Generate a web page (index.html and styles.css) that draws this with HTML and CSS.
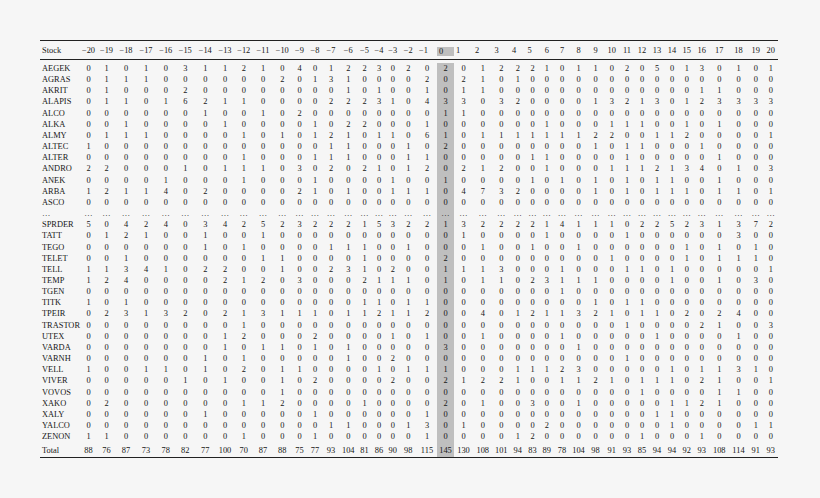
FILE: index.html
```html
<!DOCTYPE html>
<html lang="en">
<head>
<meta charset="utf-8">
<title>Event window counts</title>
<link rel="stylesheet" href="styles.css">
</head>
<body>
<div class="page">
<table class="counts">
<colgroup><col><col><col><col><col><col><col><col><col><col><col><col><col><col><col><col><col><col><col><col><col><col><col><col><col><col><col><col><col><col><col><col><col><col><col><col><col><col><col><col><col><col></colgroup>
<thead>
<tr><th class="lab">Stock</th><th>−20</th><th>−19</th><th>−18</th><th>−17</th><th>−16</th><th>−15</th><th>−14</th><th>−13</th><th>−12</th><th>−11</th><th>−10</th><th>−9</th><th>−8</th><th>−7</th><th>−6</th><th>−5</th><th>−4</th><th>−3</th><th>−2</th><th>−1</th><th><span class="zero">0</span></th><th>1</th><th>2</th><th>3</th><th>4</th><th>5</th><th>6</th><th>7</th><th>8</th><th>9</th><th>10</th><th>11</th><th>12</th><th>13</th><th>14</th><th>15</th><th>16</th><th>17</th><th>18</th><th>19</th><th>20</th></tr>
</thead>
<tbody>
<tr><th class="lab">AEGEK</th><td>0</td><td>1</td><td>0</td><td>1</td><td>0</td><td>3</td><td>1</td><td>1</td><td>2</td><td>1</td><td>0</td><td>4</td><td>0</td><td>1</td><td>2</td><td>2</td><td>3</td><td>0</td><td>2</td><td>0</td><td>2</td><td>0</td><td>1</td><td>2</td><td>2</td><td>2</td><td>1</td><td>0</td><td>1</td><td>1</td><td>0</td><td>2</td><td>0</td><td>5</td><td>0</td><td>1</td><td>3</td><td>0</td><td>1</td><td>0</td><td>1</td></tr>
<tr><th class="lab">AGRAS</th><td>0</td><td>1</td><td>1</td><td>1</td><td>0</td><td>0</td><td>0</td><td>0</td><td>0</td><td>0</td><td>2</td><td>0</td><td>1</td><td>3</td><td>1</td><td>0</td><td>0</td><td>0</td><td>0</td><td>2</td><td>0</td><td>2</td><td>1</td><td>0</td><td>1</td><td>0</td><td>0</td><td>0</td><td>0</td><td>0</td><td>0</td><td>0</td><td>0</td><td>0</td><td>0</td><td>0</td><td>0</td><td>0</td><td>0</td><td>0</td><td>0</td></tr>
<tr><th class="lab">AKRIT</th><td>0</td><td>1</td><td>0</td><td>0</td><td>0</td><td>2</td><td>0</td><td>0</td><td>0</td><td>0</td><td>0</td><td>0</td><td>0</td><td>0</td><td>1</td><td>0</td><td>1</td><td>0</td><td>0</td><td>1</td><td>0</td><td>1</td><td>1</td><td>0</td><td>0</td><td>0</td><td>0</td><td>0</td><td>0</td><td>0</td><td>0</td><td>0</td><td>0</td><td>0</td><td>0</td><td>0</td><td>1</td><td>1</td><td>0</td><td>0</td><td>0</td></tr>
<tr><th class="lab">ALAPIS</th><td>0</td><td>1</td><td>1</td><td>0</td><td>1</td><td>6</td><td>2</td><td>1</td><td>1</td><td>0</td><td>0</td><td>0</td><td>0</td><td>2</td><td>2</td><td>2</td><td>3</td><td>1</td><td>0</td><td>4</td><td>3</td><td>3</td><td>0</td><td>3</td><td>2</td><td>0</td><td>0</td><td>0</td><td>0</td><td>1</td><td>3</td><td>2</td><td>1</td><td>3</td><td>0</td><td>1</td><td>2</td><td>3</td><td>3</td><td>3</td><td>3</td></tr>
<tr><th class="lab">ALCO</th><td>0</td><td>0</td><td>0</td><td>0</td><td>0</td><td>0</td><td>1</td><td>0</td><td>0</td><td>1</td><td>0</td><td>2</td><td>0</td><td>0</td><td>0</td><td>0</td><td>0</td><td>0</td><td>0</td><td>0</td><td>1</td><td>1</td><td>0</td><td>0</td><td>0</td><td>0</td><td>0</td><td>0</td><td>0</td><td>0</td><td>0</td><td>0</td><td>0</td><td>0</td><td>0</td><td>0</td><td>0</td><td>0</td><td>0</td><td>0</td><td>0</td></tr>
<tr><th class="lab">ALKA</th><td>0</td><td>0</td><td>1</td><td>0</td><td>0</td><td>0</td><td>0</td><td>1</td><td>0</td><td>0</td><td>0</td><td>0</td><td>1</td><td>0</td><td>2</td><td>2</td><td>0</td><td>0</td><td>0</td><td>1</td><td>0</td><td>0</td><td>0</td><td>0</td><td>0</td><td>0</td><td>1</td><td>0</td><td>0</td><td>0</td><td>1</td><td>1</td><td>1</td><td>0</td><td>0</td><td>1</td><td>0</td><td>1</td><td>0</td><td>0</td><td>0</td></tr>
<tr><th class="lab">ALMY</th><td>0</td><td>1</td><td>1</td><td>1</td><td>0</td><td>0</td><td>0</td><td>0</td><td>1</td><td>0</td><td>1</td><td>0</td><td>1</td><td>2</td><td>1</td><td>0</td><td>1</td><td>1</td><td>0</td><td>6</td><td>1</td><td>0</td><td>1</td><td>1</td><td>1</td><td>1</td><td>1</td><td>1</td><td>1</td><td>2</td><td>2</td><td>0</td><td>0</td><td>1</td><td>1</td><td>2</td><td>0</td><td>0</td><td>0</td><td>0</td><td>1</td></tr>
<tr><th class="lab">ALTEC</th><td>1</td><td>0</td><td>0</td><td>0</td><td>0</td><td>0</td><td>0</td><td>0</td><td>0</td><td>0</td><td>0</td><td>0</td><td>0</td><td>1</td><td>1</td><td>0</td><td>0</td><td>0</td><td>1</td><td>0</td><td>2</td><td>0</td><td>0</td><td>0</td><td>0</td><td>0</td><td>0</td><td>0</td><td>0</td><td>1</td><td>0</td><td>1</td><td>1</td><td>0</td><td>0</td><td>0</td><td>1</td><td>0</td><td>0</td><td>0</td><td>0</td></tr>
<tr><th class="lab">ALTER</th><td>0</td><td>0</td><td>0</td><td>0</td><td>0</td><td>0</td><td>0</td><td>0</td><td>1</td><td>0</td><td>0</td><td>0</td><td>1</td><td>1</td><td>1</td><td>0</td><td>0</td><td>0</td><td>1</td><td>1</td><td>0</td><td>0</td><td>0</td><td>0</td><td>0</td><td>1</td><td>1</td><td>0</td><td>0</td><td>0</td><td>0</td><td>1</td><td>0</td><td>0</td><td>0</td><td>0</td><td>0</td><td>1</td><td>0</td><td>0</td><td>0</td></tr>
<tr><th class="lab">ANDRO</th><td>2</td><td>2</td><td>0</td><td>0</td><td>0</td><td>1</td><td>0</td><td>1</td><td>1</td><td>1</td><td>0</td><td>3</td><td>0</td><td>2</td><td>0</td><td>2</td><td>1</td><td>0</td><td>1</td><td>2</td><td>0</td><td>2</td><td>1</td><td>2</td><td>0</td><td>0</td><td>1</td><td>0</td><td>0</td><td>0</td><td>1</td><td>1</td><td>1</td><td>2</td><td>1</td><td>3</td><td>4</td><td>0</td><td>1</td><td>0</td><td>3</td></tr>
<tr><th class="lab">ANEK</th><td>0</td><td>0</td><td>0</td><td>0</td><td>1</td><td>0</td><td>0</td><td>0</td><td>1</td><td>0</td><td>0</td><td>0</td><td>1</td><td>0</td><td>0</td><td>0</td><td>0</td><td>1</td><td>0</td><td>0</td><td>1</td><td>0</td><td>0</td><td>0</td><td>0</td><td>1</td><td>0</td><td>1</td><td>0</td><td>1</td><td>0</td><td>1</td><td>0</td><td>1</td><td>1</td><td>0</td><td>0</td><td>1</td><td>0</td><td>0</td><td>0</td></tr>
<tr><th class="lab">ARBA</th><td>1</td><td>2</td><td>1</td><td>1</td><td>4</td><td>0</td><td>2</td><td>0</td><td>0</td><td>0</td><td>0</td><td>2</td><td>1</td><td>0</td><td>1</td><td>0</td><td>0</td><td>1</td><td>1</td><td>1</td><td>0</td><td>4</td><td>7</td><td>3</td><td>2</td><td>0</td><td>0</td><td>0</td><td>0</td><td>1</td><td>0</td><td>1</td><td>0</td><td>1</td><td>1</td><td>1</td><td>0</td><td>1</td><td>1</td><td>0</td><td>1</td></tr>
<tr><th class="lab">ASCO</th><td>0</td><td>0</td><td>0</td><td>0</td><td>0</td><td>0</td><td>0</td><td>0</td><td>0</td><td>0</td><td>0</td><td>0</td><td>0</td><td>0</td><td>0</td><td>0</td><td>0</td><td>0</td><td>0</td><td>0</td><td>0</td><td>0</td><td>0</td><td>0</td><td>0</td><td>0</td><td>0</td><td>0</td><td>0</td><td>0</td><td>0</td><td>0</td><td>0</td><td>0</td><td>0</td><td>0</td><td>0</td><td>0</td><td>0</td><td>0</td><td>0</td></tr>
<tr class="dots"><th class="lab">…</th><td>…</td><td>…</td><td>…</td><td>…</td><td>…</td><td>…</td><td>…</td><td>…</td><td>…</td><td>…</td><td>…</td><td>…</td><td>…</td><td>…</td><td>…</td><td>…</td><td>…</td><td>…</td><td>…</td><td>…</td><td>…</td><td>…</td><td>…</td><td>…</td><td>…</td><td>…</td><td>…</td><td>…</td><td>…</td><td>…</td><td>…</td><td>…</td><td>…</td><td>…</td><td>…</td><td>…</td><td>…</td><td>…</td><td>…</td><td>…</td><td>…</td></tr>
<tr><th class="lab">SPRDER</th><td>5</td><td>0</td><td>4</td><td>2</td><td>4</td><td>0</td><td>3</td><td>4</td><td>2</td><td>5</td><td>2</td><td>3</td><td>2</td><td>2</td><td>2</td><td>1</td><td>5</td><td>3</td><td>2</td><td>2</td><td>1</td><td>3</td><td>2</td><td>2</td><td>2</td><td>2</td><td>1</td><td>4</td><td>1</td><td>1</td><td>1</td><td>0</td><td>2</td><td>2</td><td>5</td><td>2</td><td>3</td><td>1</td><td>3</td><td>7</td><td>2</td></tr>
<tr><th class="lab">TATT</th><td>0</td><td>1</td><td>2</td><td>1</td><td>0</td><td>0</td><td>1</td><td>0</td><td>0</td><td>1</td><td>0</td><td>0</td><td>0</td><td>0</td><td>0</td><td>0</td><td>0</td><td>0</td><td>0</td><td>0</td><td>0</td><td>1</td><td>0</td><td>0</td><td>0</td><td>0</td><td>1</td><td>0</td><td>0</td><td>0</td><td>0</td><td>1</td><td>0</td><td>0</td><td>0</td><td>0</td><td>0</td><td>0</td><td>3</td><td>0</td><td>0</td></tr>
<tr><th class="lab">TEGO</th><td>0</td><td>0</td><td>0</td><td>0</td><td>0</td><td>0</td><td>1</td><td>0</td><td>1</td><td>0</td><td>0</td><td>0</td><td>0</td><td>1</td><td>1</td><td>1</td><td>0</td><td>0</td><td>1</td><td>0</td><td>0</td><td>0</td><td>1</td><td>0</td><td>0</td><td>1</td><td>0</td><td>0</td><td>1</td><td>0</td><td>0</td><td>0</td><td>0</td><td>0</td><td>0</td><td>1</td><td>0</td><td>1</td><td>0</td><td>1</td><td>0</td></tr>
<tr><th class="lab">TELET</th><td>0</td><td>0</td><td>1</td><td>0</td><td>0</td><td>0</td><td>0</td><td>0</td><td>0</td><td>1</td><td>1</td><td>0</td><td>0</td><td>0</td><td>0</td><td>1</td><td>0</td><td>0</td><td>0</td><td>0</td><td>2</td><td>0</td><td>0</td><td>0</td><td>0</td><td>0</td><td>0</td><td>0</td><td>0</td><td>0</td><td>1</td><td>0</td><td>0</td><td>0</td><td>0</td><td>1</td><td>0</td><td>1</td><td>1</td><td>1</td><td>0</td></tr>
<tr><th class="lab">TELL</th><td>1</td><td>1</td><td>3</td><td>4</td><td>1</td><td>0</td><td>2</td><td>2</td><td>0</td><td>0</td><td>1</td><td>0</td><td>0</td><td>2</td><td>3</td><td>1</td><td>0</td><td>2</td><td>0</td><td>0</td><td>1</td><td>1</td><td>1</td><td>3</td><td>0</td><td>0</td><td>0</td><td>1</td><td>0</td><td>0</td><td>0</td><td>1</td><td>1</td><td>0</td><td>1</td><td>0</td><td>0</td><td>0</td><td>0</td><td>0</td><td>1</td></tr>
<tr><th class="lab">TEMP</th><td>1</td><td>2</td><td>4</td><td>0</td><td>0</td><td>0</td><td>0</td><td>2</td><td>1</td><td>2</td><td>0</td><td>3</td><td>0</td><td>0</td><td>0</td><td>2</td><td>1</td><td>1</td><td>1</td><td>0</td><td>1</td><td>0</td><td>1</td><td>1</td><td>0</td><td>2</td><td>3</td><td>1</td><td>1</td><td>1</td><td>0</td><td>0</td><td>0</td><td>0</td><td>1</td><td>0</td><td>0</td><td>1</td><td>0</td><td>3</td><td>0</td></tr>
<tr><th class="lab">TGEN</th><td>0</td><td>0</td><td>0</td><td>0</td><td>0</td><td>0</td><td>0</td><td>0</td><td>0</td><td>0</td><td>0</td><td>0</td><td>0</td><td>0</td><td>0</td><td>0</td><td>0</td><td>0</td><td>0</td><td>0</td><td>0</td><td>0</td><td>0</td><td>0</td><td>0</td><td>0</td><td>0</td><td>1</td><td>0</td><td>0</td><td>0</td><td>0</td><td>0</td><td>0</td><td>0</td><td>0</td><td>0</td><td>0</td><td>0</td><td>0</td><td>0</td></tr>
<tr><th class="lab">TITK</th><td>1</td><td>0</td><td>1</td><td>0</td><td>0</td><td>0</td><td>0</td><td>0</td><td>0</td><td>0</td><td>0</td><td>0</td><td>0</td><td>0</td><td>0</td><td>1</td><td>1</td><td>0</td><td>1</td><td>1</td><td>0</td><td>0</td><td>0</td><td>0</td><td>0</td><td>0</td><td>0</td><td>0</td><td>0</td><td>1</td><td>0</td><td>1</td><td>1</td><td>0</td><td>0</td><td>0</td><td>0</td><td>0</td><td>0</td><td>0</td><td>0</td></tr>
<tr><th class="lab">TPEIR</th><td>0</td><td>2</td><td>3</td><td>1</td><td>3</td><td>2</td><td>0</td><td>2</td><td>1</td><td>3</td><td>1</td><td>1</td><td>1</td><td>0</td><td>1</td><td>1</td><td>2</td><td>1</td><td>1</td><td>2</td><td>0</td><td>0</td><td>4</td><td>0</td><td>1</td><td>2</td><td>1</td><td>1</td><td>3</td><td>2</td><td>1</td><td>0</td><td>1</td><td>1</td><td>0</td><td>2</td><td>0</td><td>2</td><td>4</td><td>0</td><td>0</td></tr>
<tr><th class="lab">TRASTOR</th><td>0</td><td>0</td><td>0</td><td>0</td><td>0</td><td>0</td><td>0</td><td>0</td><td>1</td><td>0</td><td>0</td><td>0</td><td>0</td><td>0</td><td>0</td><td>0</td><td>0</td><td>0</td><td>0</td><td>0</td><td>0</td><td>0</td><td>0</td><td>0</td><td>0</td><td>0</td><td>0</td><td>0</td><td>0</td><td>0</td><td>0</td><td>1</td><td>0</td><td>0</td><td>0</td><td>0</td><td>2</td><td>1</td><td>0</td><td>0</td><td>3</td></tr>
<tr><th class="lab">UTEX</th><td>0</td><td>0</td><td>0</td><td>0</td><td>0</td><td>0</td><td>0</td><td>1</td><td>2</td><td>0</td><td>0</td><td>0</td><td>2</td><td>0</td><td>0</td><td>0</td><td>0</td><td>1</td><td>0</td><td>1</td><td>0</td><td>0</td><td>1</td><td>0</td><td>0</td><td>0</td><td>0</td><td>1</td><td>0</td><td>0</td><td>0</td><td>0</td><td>0</td><td>1</td><td>0</td><td>0</td><td>0</td><td>0</td><td>1</td><td>0</td><td>0</td></tr>
<tr><th class="lab">VARDA</th><td>0</td><td>0</td><td>0</td><td>0</td><td>0</td><td>0</td><td>0</td><td>1</td><td>0</td><td>1</td><td>1</td><td>0</td><td>1</td><td>0</td><td>1</td><td>0</td><td>0</td><td>0</td><td>0</td><td>0</td><td>3</td><td>0</td><td>0</td><td>0</td><td>0</td><td>0</td><td>0</td><td>0</td><td>1</td><td>0</td><td>0</td><td>0</td><td>0</td><td>0</td><td>0</td><td>0</td><td>0</td><td>0</td><td>0</td><td>0</td><td>0</td></tr>
<tr><th class="lab">VARNH</th><td>0</td><td>0</td><td>0</td><td>0</td><td>0</td><td>0</td><td>1</td><td>0</td><td>1</td><td>0</td><td>0</td><td>0</td><td>0</td><td>0</td><td>1</td><td>0</td><td>0</td><td>2</td><td>0</td><td>0</td><td>0</td><td>0</td><td>0</td><td>0</td><td>0</td><td>0</td><td>0</td><td>0</td><td>0</td><td>0</td><td>0</td><td>1</td><td>0</td><td>0</td><td>0</td><td>0</td><td>0</td><td>0</td><td>0</td><td>0</td><td>0</td></tr>
<tr><th class="lab">VELL</th><td>1</td><td>0</td><td>0</td><td>1</td><td>1</td><td>0</td><td>1</td><td>0</td><td>2</td><td>0</td><td>1</td><td>1</td><td>0</td><td>0</td><td>0</td><td>0</td><td>1</td><td>0</td><td>1</td><td>1</td><td>1</td><td>0</td><td>0</td><td>0</td><td>1</td><td>1</td><td>1</td><td>2</td><td>3</td><td>0</td><td>0</td><td>0</td><td>0</td><td>0</td><td>1</td><td>0</td><td>1</td><td>1</td><td>3</td><td>1</td><td>0</td></tr>
<tr><th class="lab">VIVER</th><td>0</td><td>0</td><td>0</td><td>0</td><td>0</td><td>1</td><td>0</td><td>1</td><td>0</td><td>0</td><td>1</td><td>0</td><td>2</td><td>0</td><td>0</td><td>0</td><td>0</td><td>2</td><td>0</td><td>0</td><td>2</td><td>1</td><td>2</td><td>2</td><td>1</td><td>0</td><td>0</td><td>1</td><td>1</td><td>2</td><td>1</td><td>0</td><td>1</td><td>1</td><td>1</td><td>0</td><td>2</td><td>1</td><td>0</td><td>0</td><td>1</td></tr>
<tr><th class="lab">VOVOS</th><td>0</td><td>0</td><td>0</td><td>0</td><td>0</td><td>0</td><td>0</td><td>0</td><td>0</td><td>0</td><td>1</td><td>0</td><td>0</td><td>0</td><td>0</td><td>0</td><td>0</td><td>0</td><td>0</td><td>0</td><td>0</td><td>0</td><td>0</td><td>0</td><td>0</td><td>0</td><td>0</td><td>0</td><td>0</td><td>0</td><td>0</td><td>0</td><td>1</td><td>0</td><td>0</td><td>0</td><td>0</td><td>1</td><td>1</td><td>0</td><td>0</td></tr>
<tr><th class="lab">XAKO</th><td>0</td><td>2</td><td>0</td><td>0</td><td>0</td><td>0</td><td>0</td><td>0</td><td>1</td><td>1</td><td>2</td><td>0</td><td>0</td><td>0</td><td>0</td><td>1</td><td>0</td><td>0</td><td>0</td><td>0</td><td>2</td><td>0</td><td>1</td><td>0</td><td>0</td><td>3</td><td>0</td><td>0</td><td>1</td><td>0</td><td>0</td><td>0</td><td>0</td><td>0</td><td>1</td><td>1</td><td>2</td><td>1</td><td>0</td><td>0</td><td>0</td></tr>
<tr><th class="lab">XALY</th><td>0</td><td>0</td><td>0</td><td>0</td><td>0</td><td>0</td><td>1</td><td>0</td><td>0</td><td>0</td><td>0</td><td>0</td><td>1</td><td>0</td><td>0</td><td>0</td><td>0</td><td>0</td><td>0</td><td>1</td><td>0</td><td>0</td><td>0</td><td>0</td><td>0</td><td>0</td><td>0</td><td>0</td><td>0</td><td>0</td><td>0</td><td>0</td><td>0</td><td>1</td><td>1</td><td>0</td><td>0</td><td>0</td><td>0</td><td>0</td><td>0</td></tr>
<tr><th class="lab">YALCO</th><td>0</td><td>0</td><td>0</td><td>0</td><td>0</td><td>0</td><td>0</td><td>0</td><td>0</td><td>0</td><td>0</td><td>0</td><td>0</td><td>1</td><td>1</td><td>0</td><td>0</td><td>0</td><td>1</td><td>3</td><td>0</td><td>1</td><td>0</td><td>0</td><td>0</td><td>0</td><td>2</td><td>0</td><td>0</td><td>0</td><td>0</td><td>0</td><td>0</td><td>0</td><td>1</td><td>0</td><td>0</td><td>0</td><td>0</td><td>1</td><td>1</td></tr>
<tr><th class="lab">ZENON</th><td>1</td><td>1</td><td>0</td><td>0</td><td>0</td><td>0</td><td>0</td><td>0</td><td>1</td><td>0</td><td>0</td><td>0</td><td>1</td><td>0</td><td>0</td><td>0</td><td>0</td><td>0</td><td>0</td><td>1</td><td>0</td><td>0</td><td>0</td><td>0</td><td>1</td><td>2</td><td>0</td><td>0</td><td>0</td><td>0</td><td>0</td><td>0</td><td>1</td><td>0</td><td>0</td><td>0</td><td>1</td><td>0</td><td>0</td><td>0</td><td>0</td></tr>
</tbody>
<tfoot>
<tr><th class="lab">Total</th><td>88</td><td>76</td><td>87</td><td>73</td><td>78</td><td>82</td><td>77</td><td>100</td><td>70</td><td>87</td><td>88</td><td>75</td><td>77</td><td>93</td><td>104</td><td>81</td><td>86</td><td>90</td><td>98</td><td>115</td><td>145</td><td>130</td><td>108</td><td>101</td><td>94</td><td>83</td><td>89</td><td>78</td><td>104</td><td>98</td><td>91</td><td>93</td><td>85</td><td>94</td><td>94</td><td>92</td><td>93</td><td>108</td><td>114</td><td>91</td><td>93</td></tr>
</tfoot>
</table>
</div>
</body>
</html>
```

FILE: styles.css
```css
html, body {
  margin: 0;
  background: #f6f6f6;
}

body {
  font-family: "Liberation Serif", "Times New Roman", serif;
  font-size: 8.4px;
  color: #161616;
}

.page {
  padding: 40px 0 0 40px;
}

.counts {
  border-collapse: separate;
  border-spacing: 0;
  table-layout: fixed;
  width: 738px;
}

.counts th,
.counts td {
  padding: 0;
  font-weight: normal;
  text-align: center;
  white-space: nowrap;
}

.counts .lab {
  text-align: left;
  text-indent: 2px;
}

/* header */
.counts thead th {
  border-top: 1px solid #222;
  border-bottom: 1px solid #222;
  padding: 4px 0 3px;
  line-height: 11px;
}

.counts thead th:nth-child(n+21):nth-child(-n+27) {
  text-align: left;
  text-indent: 2px;
}

.counts thead th:nth-child(21) {
  text-indent: -2px;
}

.counts .zero {
  display: block;
  margin-top: 2px;
  height: 9px;
  line-height: 9px;
  background: #bfbfbf;
}

/* body */
.counts tbody th,
.counts tbody td {
  line-height: 11.15px;
}

.counts tbody tr:first-child > * {
  border-top: 3px solid #f6f6f6;
}

.counts tbody td:nth-child(22),
.counts tfoot td:nth-child(22) {
  background: #bfbfbf;
}

/* total */
.counts tfoot th,
.counts tfoot td {
  line-height: 11.15px;
  padding: 3px 0 1px;
  border-bottom: 1px solid #222;
}

/* column widths */
.counts col:nth-child(1) { width: 40px; }
.counts col:nth-child(2) { width: 17px; }
.counts col:nth-child(3) { width: 19px; }
.counts col:nth-child(4) { width: 20px; }
.counts col:nth-child(5) { width: 20px; }
.counts col:nth-child(6) { width: 19.5px; }
.counts col:nth-child(7) { width: 19.5px; }
.counts col:nth-child(8) { width: 20.5px; }
.counts col:nth-child(9) { width: 19px; }
.counts col:nth-child(10) { width: 18.5px; }
.counts col:nth-child(11) { width: 20px; }
.counts col:nth-child(12) { width: 18.5px; }
.counts col:nth-child(13) { width: 16px; }
.counts col:nth-child(14) { width: 15px; }
.counts col:nth-child(15) { width: 17px; }
.counts col:nth-child(16) { width: 17.5px; }
.counts col:nth-child(17) { width: 15px; }
.counts col:nth-child(18) { width: 14px; }
.counts col:nth-child(19) { width: 13.5px; }
.counts col:nth-child(20) { width: 17.5px; }
.counts col:nth-child(21) { width: 20px; }
.counts col:nth-child(22) { width: 17px; }
.counts col:nth-child(23) { width: 19px; }
.counts col:nth-child(24) { width: 19.5px; }
.counts col:nth-child(25) { width: 17.5px; }
.counts col:nth-child(26) { width: 15.5px; }
.counts col:nth-child(27) { width: 14px; }
.counts col:nth-child(28) { width: 14.5px; }
.counts col:nth-child(29) { width: 16px; }
.counts col:nth-child(30) { width: 17px; }
.counts col:nth-child(31) { width: 17px; }
.counts col:nth-child(32) { width: 15.5px; }
.counts col:nth-child(33) { width: 15px; }
.counts col:nth-child(34) { width: 15px; }
.counts col:nth-child(35) { width: 15px; }
.counts col:nth-child(36) { width: 15px; }
.counts col:nth-child(37) { width: 14.5px; }
.counts col:nth-child(38) { width: 15.5px; }
.counts col:nth-child(39) { width: 19.5px; }
.counts col:nth-child(40) { width: 19px; }
.counts col:nth-child(41) { width: 15.5px; }
.counts col:nth-child(42) { width: 14.5px; }
```
